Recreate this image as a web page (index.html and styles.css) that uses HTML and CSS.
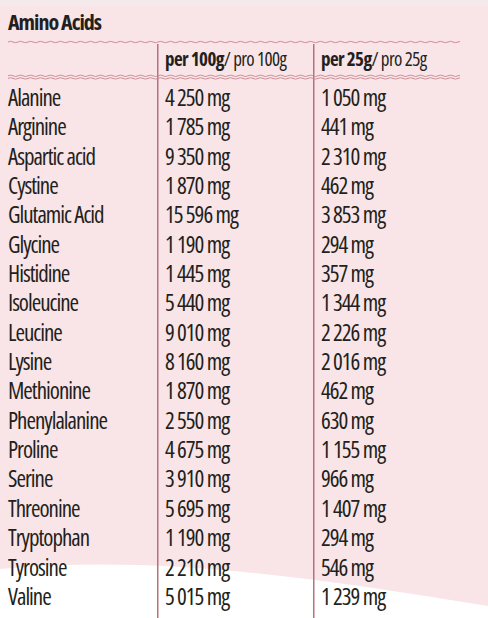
FILE: index.html
```html
<!DOCTYPE html>
<html lang="en">
<head>
<meta charset="utf-8">
<title>Amino Acids</title>
<link rel="stylesheet" href="styles.css">
</head>
<body>
<svg class="defs" width="0" height="0" aria-hidden="true">
  <defs>
    <pattern id="wave1" width="10" height="4" patternUnits="userSpaceOnUse">
      <path d="M0 2 Q2.5 0.6 5 2 T10 2" fill="none" stroke="#c5848e" stroke-width="0.9"/>
    </pattern>
    <pattern id="wave2" width="10" height="6" patternUnits="userSpaceOnUse">
      <path d="M0 1.8 Q2.5 0.4 5 1.8 T10 1.8" fill="none" stroke="#c5848e" stroke-width="0.9"/>
      <path d="M0 4.4 Q2.5 3 5 4.4 T10 4.4" fill="none" stroke="#c5848e" stroke-width="0.9"/>
    </pattern>
  </defs>
</svg>
<div class="page">
  <svg class="backdrop" width="488" height="618" viewBox="0 0 488 618" aria-hidden="true">
    <path d="M0 569 C150 555 300 575 488 606 L488 618 L0 618 Z" fill="#ffffff"/>
  </svg>
  <h1 class="title">Amino Acids</h1>
  <div class="table">
    <svg class="wave" width="452" height="4" aria-hidden="true"><rect width="452" height="4" fill="url(#wave1)"/></svg>
    <div class="grid">
      <div class="row head">
        <div class="cell"></div>
        <div class="cell"><b>per 100g</b>/ pro 100g</div>
        <div class="cell"><b>per 25g</b>/ pro 25g</div>
      </div>
      <svg class="wave double" width="452" height="6" aria-hidden="true"><rect width="452" height="6" fill="url(#wave2)"/></svg>
      <div class="rows">
        <div class="row"><div class="cell">Alanine</div><div class="cell">4&nbsp;250 mg</div><div class="cell">1&nbsp;050 mg</div></div>
        <div class="row"><div class="cell">Arginine</div><div class="cell">1&nbsp;785 mg</div><div class="cell">441 mg</div></div>
        <div class="row"><div class="cell">Aspartic acid</div><div class="cell">9&nbsp;350 mg</div><div class="cell">2&nbsp;310 mg</div></div>
        <div class="row"><div class="cell">Cystine</div><div class="cell">1&nbsp;870 mg</div><div class="cell">462 mg</div></div>
        <div class="row"><div class="cell">Glutamic Acid</div><div class="cell">15&nbsp;596 mg</div><div class="cell">3&nbsp;853 mg</div></div>
        <div class="row"><div class="cell">Glycine</div><div class="cell">1&nbsp;190 mg</div><div class="cell">294 mg</div></div>
        <div class="row"><div class="cell">Histidine</div><div class="cell">1&nbsp;445 mg</div><div class="cell">357 mg</div></div>
        <div class="row"><div class="cell">Isoleucine</div><div class="cell">5&nbsp;440 mg</div><div class="cell">1&nbsp;344 mg</div></div>
        <div class="row"><div class="cell">Leucine</div><div class="cell">9&nbsp;010 mg</div><div class="cell">2&nbsp;226 mg</div></div>
        <div class="row"><div class="cell">Lysine</div><div class="cell">8&nbsp;160 mg</div><div class="cell">2&nbsp;016 mg</div></div>
        <div class="row"><div class="cell">Methionine</div><div class="cell">1&nbsp;870 mg</div><div class="cell">462 mg</div></div>
        <div class="row"><div class="cell">Phenylalanine</div><div class="cell">2&nbsp;550 mg</div><div class="cell">630 mg</div></div>
        <div class="row"><div class="cell">Proline</div><div class="cell">4&nbsp;675 mg</div><div class="cell">1&nbsp;155 mg</div></div>
        <div class="row"><div class="cell">Serine</div><div class="cell">3&nbsp;910 mg</div><div class="cell">966 mg</div></div>
        <div class="row"><div class="cell">Threonine</div><div class="cell">5&nbsp;695 mg</div><div class="cell">1&nbsp;407 mg</div></div>
        <div class="row"><div class="cell">Tryptophan</div><div class="cell">1&nbsp;190 mg</div><div class="cell">294 mg</div></div>
        <div class="row"><div class="cell">Tyrosine</div><div class="cell">2&nbsp;210 mg</div><div class="cell">546 mg</div></div>
        <div class="row"><div class="cell">Valine</div><div class="cell">5&nbsp;015 mg</div><div class="cell">1&nbsp;239 mg</div></div>
      </div>
    </div>
  </div>
</div>
</body>
</html>
```
FILE: styles.css
```css
html, body {
  margin: 0;
  padding: 0;
}
body {
  background: linear-gradient(#f4e9eb 0, #f4e9eb 6px, #f9e5e7 6px);
  color: #231f20;
  font-family: "Open Sans", "Liberation Sans", sans-serif;
  font-stretch: 75%;
  overflow: hidden;
}
.defs {
  position: absolute;
  width: 0;
  height: 0;
}
.page {
  position: relative;
  box-sizing: border-box;
  height: 618px;
  padding: 6px 28px 0 8px;
  display: flex;
  flex-direction: column;
}
.backdrop {
  position: absolute;
  left: 0;
  top: 0;
  z-index: 0;
}
.title {
  position: relative;
  margin: 0 0 4px;
  font-size: 22px;
  line-height: 30px;
  font-weight: 700;
  letter-spacing: -1px;
}
.table {
  position: relative;
  flex: 1;
  display: flex;
  flex-direction: column;
  width: 452px;
}
.wave {
  display: block;
  flex: none;
}
.grid {
  flex: 1;
  display: flex;
  flex-direction: column;
  background-image:
    linear-gradient(#b8727d, #b8727d),
    linear-gradient(#b8727d, #b8727d);
  background-size: 1.5px 100%, 1.5px 100%;
  background-position: 148.5px 0, 304.5px 0;
  background-repeat: no-repeat;
}
.row {
  display: grid;
  grid-template-columns: 149px 156px 1fr;
  font-size: 23px;
  line-height: 29.35px;
  letter-spacing: -1px;
}
.row .cell + .cell {
  padding-left: 8px;
}
.head {
  font-size: 19px;
  line-height: 30px;
  letter-spacing: -0.6px;
}
.head b {
  font-weight: 700;
}
.double {
  margin-bottom: 3px;
}
.rows {
  display: flex;
  flex-direction: column;
}
```
